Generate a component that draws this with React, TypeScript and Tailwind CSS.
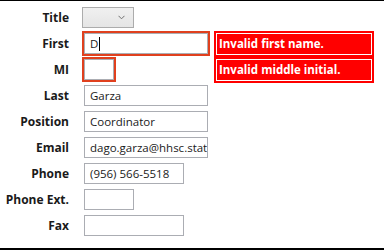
import { ReactNode } from "react";

const font = { fontFamily: '"Open Sans", "Noto Sans", sans-serif' };

function Row({ label, children }: { label: string; children: ReactNode }) {
  return (
    <div className="flex items-start h-[26px]">
      <div className="w-[69px] h-[21px] flex items-center justify-end text-[12px] font-bold text-[#1a1a1a] whitespace-nowrap">
        {label}
      </div>
      <div className="ml-[13px] flex items-start">{children}</div>
    </div>
  );
}

function Field({ width, value }: { width: number; value?: string }) {
  return (
    <div
      className="ml-[2px] h-[21px] border border-[#abadb3] bg-white flex items-center pl-[5px] overflow-hidden text-[11.5px] text-[#1a1a1a] whitespace-nowrap"
      style={{ width }}
    >
      {value}
    </div>
  );
}

function ErrorTip({ text }: { text: string }) {
  return (
    <div className="-mt-[2px] ml-[4px] w-[160px] h-[26px] bg-[#ff0000] p-[2px]">
      <div className="h-full border border-white flex items-center pl-[2px] text-white text-[11.5px] font-bold whitespace-nowrap">
        {text}
      </div>
    </div>
  );
}

export default function App() {
  return (
    <div
      className="w-[384px] h-[250px] bg-white border-t border-b-2 border-black pt-[6px] overflow-hidden"
      style={font}
    >
      <Row label="Title">
        <div className="w-[52px] h-[21px] border border-[#acacac] bg-gradient-to-b from-[#f0f0f0] to-[#e5e5e5] flex items-center justify-end pr-[8px]">
          <svg width="7" height="5" viewBox="0 0 7 5" fill="none">
            <path d="M0.5 0.8 L3.5 3.8 L6.5 0.8" stroke="#707070" strokeWidth="1" />
          </svg>
        </div>
      </Row>

      <Row label="First">
        <div className="-mt-[2px] w-[128px] h-[25px] border-2 border-[#e0401e]">
          <div className="h-full border border-[#abadb3] bg-white flex items-center pl-[5px] text-[11.5px] text-[#1a1a1a]">
            D
            <span className="ml-[1px] w-px h-[14px] bg-black" />
          </div>
        </div>
        <ErrorTip text="Invalid first name." />
      </Row>

      <Row label="MI">
        <div className="-mt-[2px] w-[34px] h-[25px] border-2 border-[#e0401e]">
          <div className="h-full border border-[#abadb3] bg-white" />
        </div>
        <div className="ml-[94px]">
          <ErrorTip text="Invalid middle initial." />
        </div>
      </Row>

      <Row label="Last">
        <Field width={124} value="Garza" />
      </Row>
      <Row label="Position">
        <Field width={124} value="Coordinator" />
      </Row>
      <Row label="Email">
        <Field width={124} value="dago.garza@hhsc.state.tx.us" />
      </Row>
      <Row label="Phone">
        <Field width={100} value="(956) 566-5518" />
      </Row>
      <Row label="Phone Ext.">
        <Field width={50} />
      </Row>
      <Row label="Fax">
        <Field width={100} />
      </Row>
    </div>
  );
}
